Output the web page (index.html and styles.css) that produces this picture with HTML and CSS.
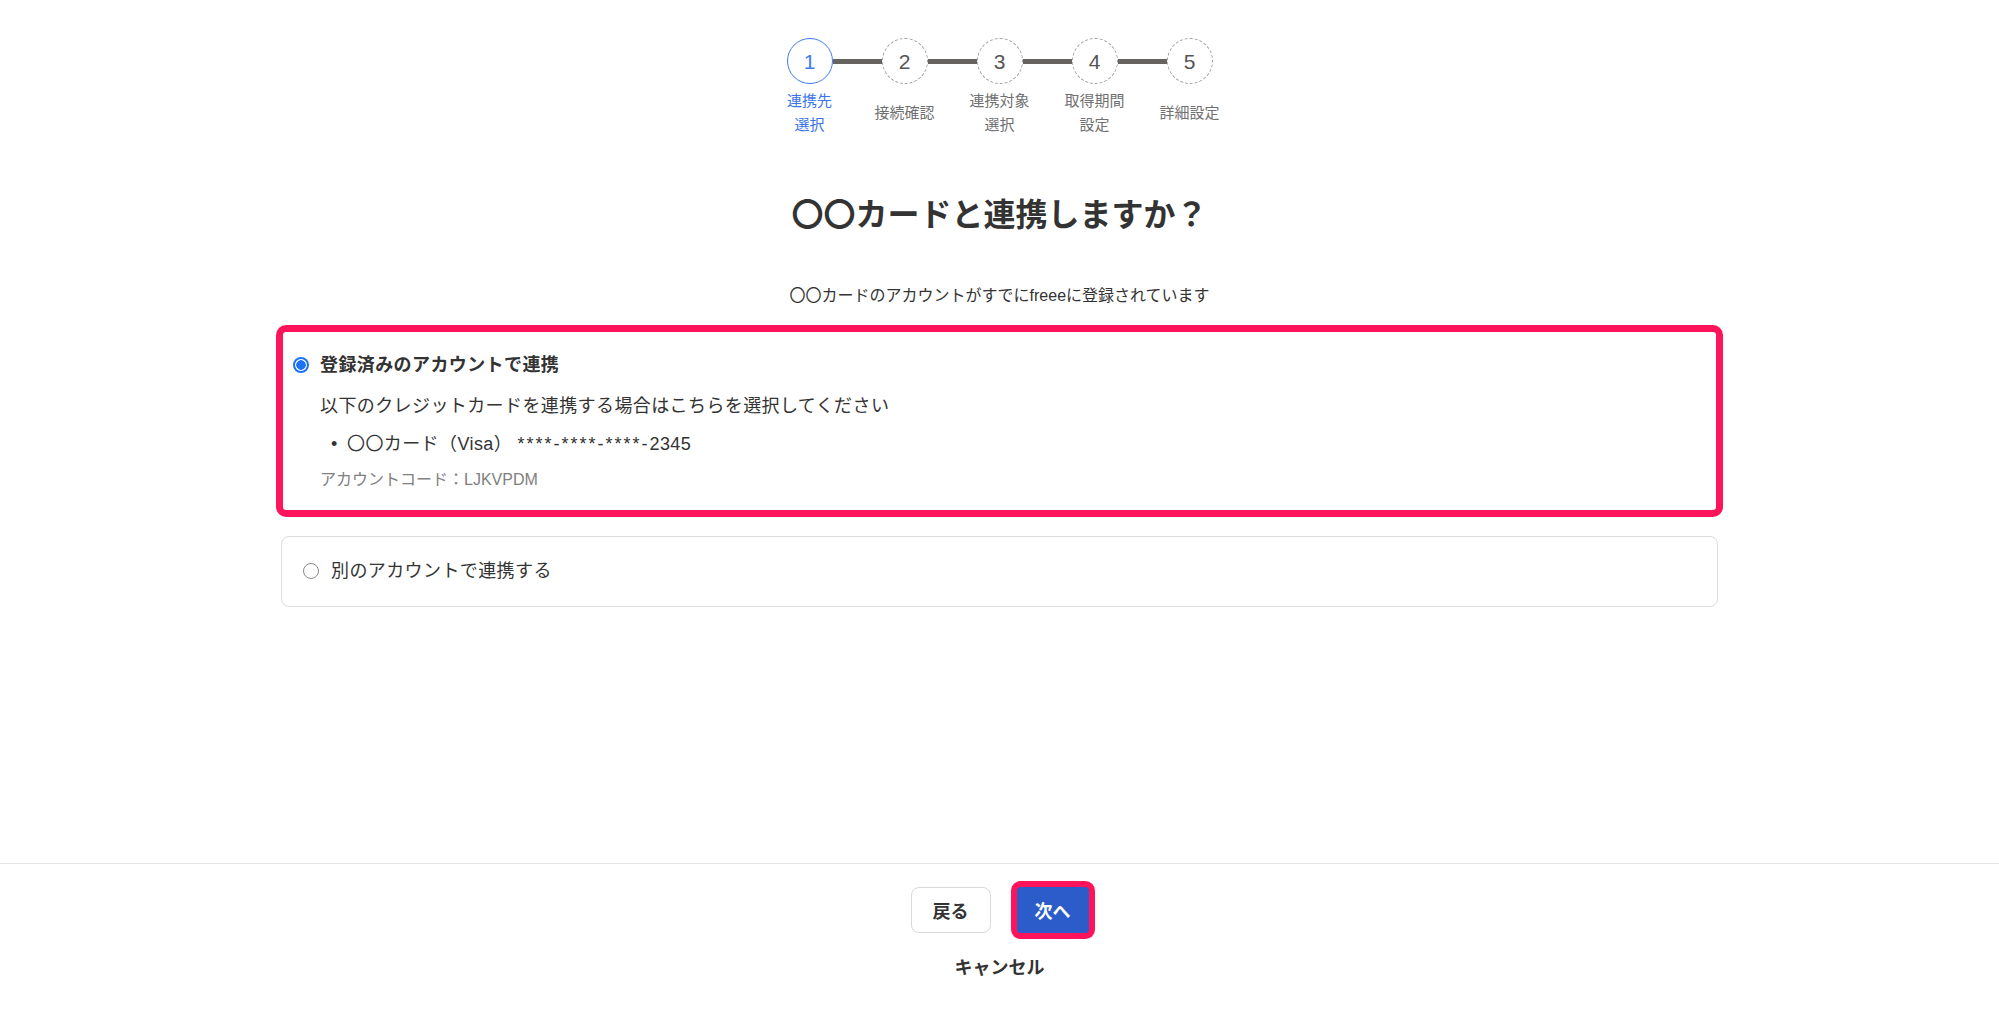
FILE: index.html
```html
<!DOCTYPE html>
<html lang="ja">
<head>
<meta charset="utf-8">
<title>連携先選択</title>
<link rel="stylesheet" href="styles.css">
</head>
<body>
<div class="page">
  <main class="main">
    <div class="stepper">
      <div class="step-circles">
        <div class="circle active">1</div>
        <div class="bar"></div>
        <div class="circle">2</div>
        <div class="bar"></div>
        <div class="circle">3</div>
        <div class="bar"></div>
        <div class="circle">4</div>
        <div class="bar"></div>
        <div class="circle">5</div>
      </div>
      <div class="step-labels">
        <div class="step-label active">連携先<br>選択</div>
        <div class="step-label">接続確認</div>
        <div class="step-label">連携対象<br>選択</div>
        <div class="step-label">取得期間<br>設定</div>
        <div class="step-label">詳細設定</div>
      </div>
    </div>

    <h1 class="title">〇〇カードと連携しますか？</h1>
    <p class="lead">〇〇カードのアカウントがすでにfreeeに登録されています</p>

    <div class="options">
      <div class="card card-selected">
        <div class="option-row">
          <span class="radio radio-on"></span>
          <span class="option-title">登録済みのアカウントで連携</span>
        </div>
        <div class="option-body">
          <p class="desc">以下のクレジットカードを連携する場合はこちらを選択してください</p>
          <div class="bullet-row"><span class="bullet">•</span><span>〇〇カード（Visa） <span class="mask">****-****-****-</span>2345</span></div>
          <p class="code">アカウントコード：LJKVPDM</p>
        </div>
      </div>
      <div class="card card-plain">
        <div class="option-row">
          <span class="radio"></span>
          <span class="option-text">別のアカウントで連携する</span>
        </div>
      </div>
    </div>
  </main>

  <footer class="footer">
    <div class="buttons">
      <button class="btn btn-back">戻る</button>
      <button class="btn btn-next">次へ</button>
    </div>
    <div class="cancel">キャンセル</div>
  </footer>
</div>
</body>
</html>
```

FILE: styles.css
```css
* { box-sizing: border-box; }
html, body { margin: 0; padding: 0; }
body {
  font-family: "Liberation Sans", "Noto Sans CJK JP", sans-serif;
  color: #333;
  background: #fff;
}
.page {
  min-height: 100vh;
  display: flex;
  flex-direction: column;
}
.main { flex: 1; }

/* stepper */
.stepper { padding-top: 38px; }
.step-circles {
  display: flex;
  justify-content: center;
  align-items: center;
}
.circle {
  width: 46px;
  height: 46px;
  border-radius: 50%;
  border: 1px dashed #9c9c9c;
  display: flex;
  align-items: center;
  justify-content: center;
  font-size: 21px;
  color: #555;
  line-height: 1;
}
.circle.active {
  border: 1.5px solid #3f7cf0;
  color: #3f7cf0;
}
.bar {
  width: 49px;
  height: 5px;
  background: #67645f;
}
.step-labels {
  display: flex;
  justify-content: center;
  align-items: center;
  margin-top: 5px;
}
.step-label {
  width: 95px;
  text-align: center;
  font-size: 15px;
  line-height: 24px;
  color: #707070;
}
.step-label.active { color: #3a74ea; }

/* heading */
.title {
  margin: 56px 0 0;
  text-align: center;
  font-size: 32px;
  line-height: 45px;
  font-weight: 700;
  color: #333;
}
.lead {
  margin: 46px 0 0;
  text-align: center;
  font-size: 16px;
  line-height: 24px;
  color: #333;
}

/* options */
.options {
  width: 1437px;
  margin: 17px auto 0;
  display: flex;
  flex-direction: column;
  gap: 19px;
}
.card { background: #fff; }
.card-selected {
  margin: 0 -5px;
  border: 7px solid #ff135a;
  border-radius: 10px;
  padding: 20px 10px 18px;
}
.card-plain {
  border: 1px solid #dcdcdc;
  border-radius: 8px;
  padding: 21px 21px 22px;
}
.option-row {
  display: flex;
  align-items: center;
  height: 26px;
}
.radio {
  width: 16px;
  height: 16px;
  border-radius: 50%;
  border: 1.5px solid #8a8a8a;
  flex: none;
  background: #fff;
}
.radio-on {
  border: 2px solid #1c74f4;
  background: radial-gradient(circle, #1c74f4 0 4.5px, #fff 5px);
}
.card-selected .radio { margin-right: 11px; }
.card-plain .radio { margin-right: 12px; }
.option-title {
  font-size: 18px;
  line-height: 26px;
  font-weight: 700;
  color: #333;
  letter-spacing: 0.4px;
}
.option-text {
  font-size: 18px;
  line-height: 26px;
  color: #333;
  letter-spacing: 0.4px;
}
.option-body { padding-left: 27px; }
.desc {
  margin: 15px 0 0;
  font-size: 18px;
  line-height: 26px;
  letter-spacing: 0.4px;
}
.bullet-row {
  margin-top: 12px;
  display: flex;
  font-size: 18px;
  line-height: 26px;
  letter-spacing: 0.4px;
  padding-left: 11px;
}
.bullet { width: 16px; flex: none; }
.mask { letter-spacing: 2px; }
.code {
  margin: 11px 0 0;
  font-size: 16px;
  line-height: 24px;
  color: #808080;
}

/* footer */
.footer {
  border-top: 1px solid #e2e4e6;
  padding: 23px 0 32px;
  display: flex;
  flex-direction: column;
  align-items: center;
}
.buttons {
  display: flex;
  gap: 26px;
}
.btn {
  font-family: inherit;
  height: 46px;
  font-size: 18px;
  font-weight: 700;
  padding: 0;
  cursor: pointer;
}
.btn-back {
  width: 80px;
  background: #fff;
  border: 1px solid #d9d9d9;
  border-radius: 8px;
  color: #333;
}
.btn-next {
  width: 72px;
  background: #2b5cc9;
  border: none;
  border-radius: 4px;
  color: #fff;
  box-shadow: 0 0 0 6px #ff135a;
}
.cancel {
  margin-top: 22px;
  font-size: 18px;
  line-height: 26px;
  font-weight: 700;
  color: #333;
}
```
